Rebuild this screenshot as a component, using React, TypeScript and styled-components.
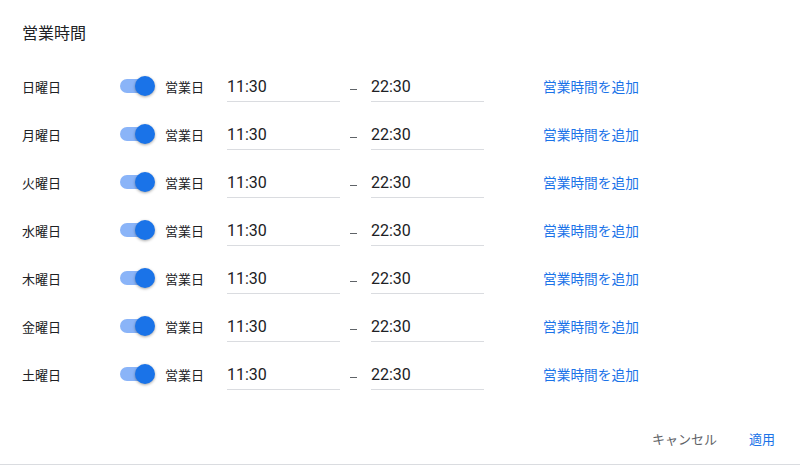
import React from "react";
import styled, { createGlobalStyle } from "styled-components";

const Global = createGlobalStyle`
  html, body {
    margin: 0;
    padding: 0;
    background: #fff;
  }
  body {
    font-family: Roboto, "Noto Sans CJK JP", sans-serif;
    color: #202124;
  }
`;

const Dialog = styled.div`
  width: 800px;
  height: 465px;
  box-sizing: border-box;
  border-bottom: 1px solid #dadce0;
  border-top-left-radius: 6px;
  background: #fff;
  display: flex;
  flex-direction: column;
`;

const Title = styled.h2`
  margin: 0;
  padding: 24px 22px 0;
  font-size: 16px;
  font-weight: 400;
  line-height: 20px;
  color: #202124;
`;

const Rows = styled.div`
  margin-top: 18px;
  display: flex;
  flex-direction: column;
`;

const Row = styled.div`
  display: grid;
  grid-template-columns: 98px 45px 62px 113px 31px 113px 60px auto;
  align-items: center;
  height: 48px;
  padding-left: 22px;
`;

const DayLabel = styled.span`
  font-size: 13px;
  color: #202124;
`;

const Track = styled.span<{ $on: boolean }>`
  position: relative;
  display: block;
  width: 34px;
  height: 14px;
  border-radius: 7px;
  background: ${(p) => (p.$on ? "#8ab4f8" : "#bdc1c6")};
`;

const Thumb = styled.span<{ $on: boolean }>`
  position: absolute;
  top: -3px;
  left: ${(p) => (p.$on ? "15px" : "-3px")};
  width: 20px;
  height: 20px;
  border-radius: 50%;
  background: ${(p) => (p.$on ? "#1a73e8" : "#fff")};
  box-shadow: 0 1px 3px rgba(0, 0, 0, 0.35);
`;

const OpenLabel = styled.span`
  font-size: 13px;
  color: #202124;
`;

const TimeField = styled.div`
  height: 30px;
  border-bottom: 1px solid #dadce0;
  display: flex;
  align-items: center;
  padding-top: 1px;
  font-size: 16px;
  color: #202124;
`;

const Dash = styled.span`
  display: block;
  width: 7px;
  height: 1px;
  margin: 6px 0 0 10px;
  background: #5f6368;
`;

const AddLink = styled.a`
  grid-column: 8;
  margin-left: -1px;
  font-size: 13.7px;
  color: #1a73e8;
  text-decoration: none;
  cursor: pointer;
`;

const Footer = styled.div`
  margin-top: auto;
  display: flex;
  justify-content: flex-end;
  align-items: center;
  gap: 16px;
  padding: 0 17px 10px 0;
`;

const FooterButton = styled.button<{ $primary?: boolean }>`
  border: none;
  background: none;
  padding: 6px 8px;
  font-family: Roboto, "Noto Sans CJK JP", sans-serif;
  font-size: 13px;
  color: ${(p) => (p.$primary ? "#1a73e8" : "#5f6368")};
  cursor: pointer;
`;

const days = ["日曜日", "月曜日", "火曜日", "水曜日", "木曜日", "金曜日", "土曜日"];

export default function App() {
  return (
    <>
      <Global />
      <Dialog>
        <Title>営業時間</Title>
        <Rows>
          {days.map((d) => (
            <Row key={d}>
              <DayLabel>{d}</DayLabel>
              <Track $on>
                <Thumb $on />
              </Track>
              <OpenLabel>営業日</OpenLabel>
              <TimeField>11:30</TimeField>
              <Dash />
              <TimeField>22:30</TimeField>
              <span />
              <AddLink>営業時間を追加</AddLink>
            </Row>
          ))}
        </Rows>
        <Footer>
          <FooterButton>キャンセル</FooterButton>
          <FooterButton $primary>適用</FooterButton>
        </Footer>
      </Dialog>
    </>
  );
}
